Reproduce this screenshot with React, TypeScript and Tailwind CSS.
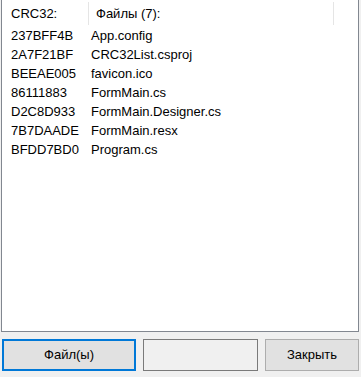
const rows = [
  ["237BFF4B", "App.config"],
  ["2A7F21BF", "CRC32List.csproj"],
  ["BEEAE005", "favicon.ico"],
  ["86111883", "FormMain.cs"],
  ["D2C8D933", "FormMain.Designer.cs"],
  ["7B7DAADE", "FormMain.resx"],
  ["BFDD7BD0", "Program.cs"],
];

function App() {
  return (
    <div
      className="w-[361px] h-[377px] bg-[#f0f0f0] flex flex-col text-[13px] text-black"
      style={{ fontFamily: '"Liberation Sans", Arial, sans-serif' }}
    >
      {/* list view */}
      <div className="ml-[1px] w-[358px] h-[332px] bg-white border-l border-r border-b border-[#828790] flex flex-col">
        <div className="flex h-[26px] pt-[2px]">
          <div className="w-[87px] flex items-center pl-[9px] border-r border-[#e5e5e5] h-[23px]">CRC32:</div>
          <div className="w-[245px] flex items-center pl-[7px] border-r border-[#e5e5e5] h-[23px]">Файлы (7):</div>
        </div>
        {rows.map(([crc, name]) => (
          <div key={crc} className="flex h-[19px] items-center">
            <div className="w-[89px] pl-[9px]">{crc}</div>
            <div>{name}</div>
          </div>
        ))}
      </div>

      {/* buttons */}
      <div className="flex mt-[7px] pl-[2px] gap-[7px]">
        <button className="w-[134px] h-[32px] bg-[#e1e1e1] border-2 border-[#0078d7] flex items-center justify-center">
          Файл(ы)
        </button>
        <button className="w-[115px] h-[32px] bg-[#f0f0f0] border border-[#7a7a7a]"></button>
        <button className="w-[94px] h-[32px] bg-[#e1e1e1] border border-[#adadad] flex items-center justify-center">
          Закрыть
        </button>
      </div>
    </div>
  );
}

export default App;
